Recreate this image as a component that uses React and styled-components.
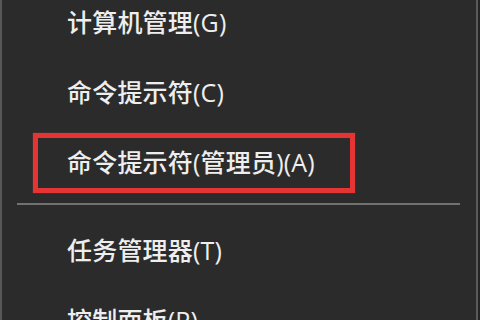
import styled, { createGlobalStyle } from "styled-components";

const GlobalStyle = createGlobalStyle`
  html, body {
    margin: 0;
    padding: 0;
    background: #242424;
  }
`;

const Menu = styled.div`
  width: 478px;
  height: 320px;
  box-sizing: border-box;
  overflow: hidden;
  background: #2b2b2b;
  border-left: 2px solid #575757;
  border-right: 2px solid #5a5a5a;
  font-family: "Open Sans", "Noto Sans CJK SC", sans-serif;
`;

const List = styled.div`
  display: flex;
  flex-direction: column;
  margin-top: -14px;
`;

const Item = styled.div`
  position: relative;
  height: 70px;
  display: flex;
  align-items: center;
  padding-left: 65px;
  color: #eeeeee;
  font-size: 25px;
  font-weight: 500;
  letter-spacing: 0.2px;

  ${(p) =>
    p.$marked &&
    `
    &::after {
      content: "";
      position: absolute;
      left: 31px;
      top: 7px;
      width: 322px;
      height: 60px;
      box-sizing: border-box;
      border: 5px solid #e53434;
      box-shadow: 0 0 1px rgba(255, 80, 80, 0.6);
    }
  `}
`;

const Separator = styled.div`
  height: 2px;
  margin: 7px 16px 9px 15px;
  background: #717171;
`;

const groups = [
  [
    { label: "计算机管理(G)" },
    { label: "命令提示符(C)" },
    { label: "命令提示符(管理员)(A)", marked: true },
  ],
  [{ label: "任务管理器(T)" }, { label: "控制面板(P)" }],
];

export default function App() {
  return (
    <>
      <GlobalStyle />
      <Menu>
        <List>
          {groups.map((group, gi) => (
            <div key={gi}>
              {gi > 0 && <Separator />}
              {group.map((item) => (
                <Item key={item.label} $marked={item.marked}>
                  {item.label}
                </Item>
              ))}
            </div>
          ))}
        </List>
      </Menu>
    </>
  );
}
